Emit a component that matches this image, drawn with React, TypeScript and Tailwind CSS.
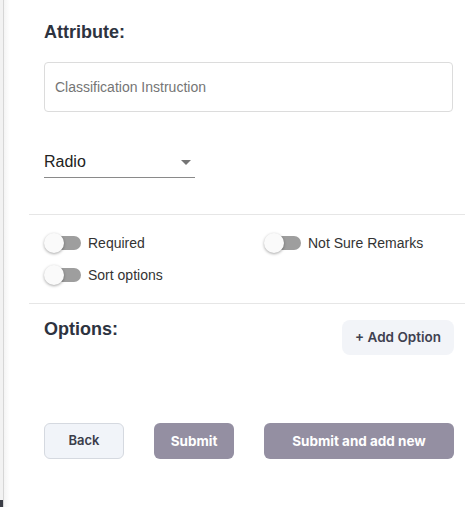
import React from "react";

const Toggle = ({ label }: { label: string }) => (
  <div className="flex h-[32px] items-center">
    <div className="relative h-[20px] w-[37px]">
      <div className="absolute left-[3px] top-[3px] h-[14px] w-[34px] rounded-full bg-[#9e9e9e]" />
      <div className="absolute left-0 top-0 h-[20px] w-[20px] rounded-full bg-[#fafafa] shadow-[0_1px_3px_rgba(0,0,0,0.35)]" />
    </div>
    <span className="ml-[7px] text-[14px] text-[#333]">{label}</span>
  </div>
);

export default function App() {
  return (
    <div
      className="flex min-h-[507px] bg-white"
      style={{ fontFamily: '"Liberation Sans", Arial, sans-serif' }}
    >
      {/* left rail */}
      <div className="flex w-[3px] flex-col justify-end bg-[#f2f2f2]">
        <div className="h-[7px] bg-[#3a3d46]" />
      </div>
      <div className="w-px bg-[#d6d6d6]" />
      <div className="w-[6px] bg-gradient-to-r from-[#f4f4f4] to-white" />

      <div className="flex-1 pl-[19px]">
        <div className="pl-[15px] pr-[12px] pt-[20px]">
          <h2 className="text-[18px] font-bold leading-[24px] text-[#2d3340]">
            Attribute:
          </h2>

          <div className="mt-[18px] flex h-[50px] items-center rounded-[4px] border border-[#dcdcdc] px-[10px]">
            <span className="text-[14px] text-[#757575]">
              Classification Instruction
            </span>
          </div>

          <div className="mt-[38px] flex w-[151px] items-center justify-between border-b border-[#8a8a8a] pb-[3px]">
            <span className="text-[16px] leading-[22px] text-[#222]">Radio</span>
            <svg width="24" height="24" viewBox="0 0 24 24" className="-mr-[3px] fill-[#757575]">
              <path d="M7 10l5 5 5-5z" />
            </svg>
          </div>
        </div>

        <div className="mt-[36px] border-t border-[#e6e6e6]" />

        <div className="px-[15px] pb-[12px] pt-[12px]">
          <div className="grid grid-cols-[220px_1fr]">
            <Toggle label="Required" />
            <Toggle label="Not Sure Remarks" />
            <Toggle label="Sort options" />
          </div>
        </div>

        <div className="border-t border-[#e6e6e6]" />

        <div
          className="pl-[15px] pr-[11px]"
          style={{ fontFamily: 'Inter, "Liberation Sans", sans-serif' }}
        >
          <div className="flex items-start justify-between pt-[16px]">
            <h2
              className="text-[18px] font-bold leading-[18px] text-[#2d3340]"
              style={{ fontFamily: '"Liberation Sans", Arial, sans-serif' }}
            >
              Options:
            </h2>
            <button className="h-[35px] w-[112px] rounded-[8px] bg-[#f2f4f8] text-[13.5px] font-semibold text-[#3f4150]">
              + Add Option
            </button>
          </div>

          <div className="mt-[68px] flex items-center">
            <button className="h-[36px] w-[80px] rounded-[6px] border border-[#d5d9e0] bg-[#f1f4f9] text-[13px] font-semibold text-[#3a3d4a]">
              Back
            </button>
            <button className="ml-[30px] h-[36px] w-[80px] rounded-[6px] bg-[#948fa2] text-[13.5px] font-bold text-white">
              Submit
            </button>
            <button className="ml-[30px] h-[36px] w-[190px] rounded-[6px] bg-[#948fa2] text-[13.5px] font-bold text-white">
              Submit and add new
            </button>
          </div>
        </div>
      </div>
    </div>
  );
}
